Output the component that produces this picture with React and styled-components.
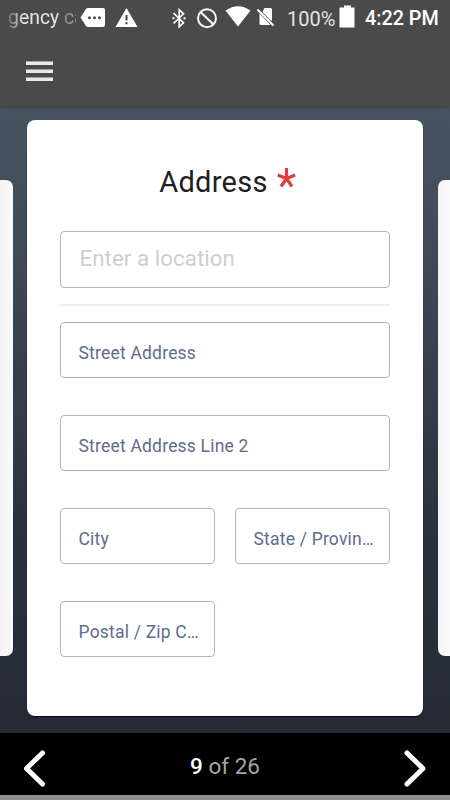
import React from "react";
import styled, { createGlobalStyle } from "styled-components";

const GlobalStyle = createGlobalStyle`
  * { box-sizing: border-box; }
  body { margin: 0; font-family: Roboto, "Liberation Sans", sans-serif; }
`;

const Screen = styled.div`
  width: 450px;
  height: 800px;
  overflow: hidden;
  display: flex;
  flex-direction: column;
  background: #000;
`;

const Header = styled.header`
  height: 106px;
  flex: none;
  background: #4a4a4a;
  box-shadow: 0 1px 4px rgba(0, 0, 0, 0.25);
  z-index: 1;
`;

const StatusBar = styled.div`
  height: 36px;
  display: flex;
  align-items: flex-start;
  padding-left: 8px;
  color: #fff;
  font-size: 20px;
  line-height: 24px;
  white-space: nowrap;
`;

const Ticker = styled.div`
  width: 68px;
  margin-top: 6px;
  overflow: hidden;
  color: #e6e6e6;
  font-size: 19.4px;
  mask-image: linear-gradient(90deg, rgba(0, 0, 0, 0.25) 0, #000 16px, #000 48px, rgba(0, 0, 0, 0.4) 58px, rgba(0, 0, 0, 0.6));
`;

const StatusIcon = styled.svg`
  flex: none;
  display: block;
  margin: ${(p) => p.$top}px 0 0 ${(p) => p.$gap}px;
`;

const BatteryLevel = styled.span`
  width: 50px;
  margin: 7px 0 0 12px;
  color: #e4e4e4;
`;

const Clock = styled.span`
  margin: 7px 0 0 9px;
  font-size: 19.8px;
  font-weight: 500;
`;

const MenuButton = styled.button`
  display: flex;
  flex-direction: column;
  gap: 4px;
  width: 27px;
  margin: 25px 0 0 26px;
  padding: 0;
  border: 0;
  background: none;
`;

const MenuLine = styled.span`
  height: 4px;
  background: #e9e9e9;
  border: solid #a0a0a0;
  border-width: 1px 0 0;
`;

const Stage = styled.main`
  height: 627px;
  flex: none;
  display: flex;
  justify-content: space-between;
  align-items: flex-start;
  padding-top: 14px;
  background: linear-gradient(180deg, #47535f 0%, #414c58 20%, #2b333f 65%, #232a34 100%);
`;

const SideCard = styled.div`
  width: 12.5px;
  height: 476.5px;
  margin-top: 59.6px;
  background: linear-gradient(90deg, #f4f4f5, #fafafa);
  border-radius: ${(p) => (p.$right ? "7px 0 0 7px" : "0 7px 7px 0")};
`;

const Card = styled.form`
  width: 396px;
  height: 596px;
  padding: 41px 33px 0;
  background: #fff;
  border-radius: 8px;
  box-shadow: 0 1px 1px #05090f;
`;

const Title = styled.h1`
  display: flex;
  justify-content: center;
  gap: 9px;
  height: 42px;
  margin: 0;
  padding-left: 5px;
  color: #202020;
  font-size: 29px;
  font-weight: 400;
  line-height: 42px;
  letter-spacing: 0.3px;
`;

const Required = styled.svg`
  margin-top: 7px;
`;

const Field = styled.div`
  min-width: 0;
  height: 56.5px;
  padding: 2px 14px 0 17.5px;
  border: 1px solid #abb4c9;
  border-radius: 4px;
  color: #5f6d8c;
  font-size: 17.5px;
  line-height: 56px;
  letter-spacing: 0.2px;
  white-space: nowrap;
  overflow: hidden;
  text-overflow: ellipsis;
`;

const LocationField = styled(Field)`
  margin-top: 28.4px;
  padding: 0 18.5px;
  color: #cecece;
  font-size: 22.3px;
  line-height: 53px;
  letter-spacing: 0.05px;
`;

const Divider = styled.hr`
  height: 2px;
  margin: 16px 0;
  border: 0;
  background: #efeff0;
`;

const FieldGrid = styled.div`
  display: grid;
  grid-template-columns: 155px 155px;
  column-gap: 20px;
  row-gap: 36.5px;
`;

const WideField = styled(Field)`
  grid-column: 1 / -1;
`;

const Footer = styled.footer`
  height: 67px;
  flex: none;
  display: flex;
  justify-content: space-between;
  align-items: flex-start;
  padding: 16px 23px 0;
  border-bottom: 5px solid #908e8e;
  background: #000;
`;

const NavButton = styled.button`
  width: 24px;
  height: 40px;
  padding: 0;
  border: 0;
  background: none;
`;

const Counter = styled.div`
  padding-top: 3px;
  color: #a5a5a5;
  font-size: 22.5px;
  line-height: 28px;
`;

const Current = styled.span`
  color: #fff;
  font-weight: 500;
`;

function StatusIcons() {
  return (
    <>
      <StatusIcon $top={8} $gap={4} width="26" height="19" viewBox="0 0 26 19">
        <path d="M8 0H23Q25 0 25 2V17Q25 19 23 19H8Q6.800 19 6 18L.5 9.500 6 1Q6.800 0 8 0Z" fill="#fff" />
        <g fill="#4a4a4a"><circle cx="9.500" cy="9.700" r="1.500" /><circle cx="14.500" cy="9.700" r="1.500" /><circle cx="19.500" cy="9.700" r="1.500" /></g>
      </StatusIcon>
      <StatusIcon $top={8} $gap={9} width="23" height="19" viewBox="0 0 23 19">
        <path d="M11.500 0 22.500 19H.5Z" fill="#fff" />
        <path d="M10.500 7h2v5.500h-2zM10.500 14h2v2.200h-2z" fill="#4a4a4a" />
      </StatusIcon>
      <StatusIcon $top={8} $gap={34} width="15" height="21" viewBox="0 0 15 21">
        <path d="M1.500 5 11.500 14.800 7.200 18.800V1.800L11.500 5.800 1.500 15.500" fill="none" stroke="#fff" strokeWidth="1.700" />
        <path d="M.5 9.300h2v2h-2zM11.500 9.300h2v2h-2z" fill="#fff" />
      </StatusIcon>
      <StatusIcon $top={8} $gap={9} width="22" height="21" viewBox="0 0 22 21">
        <circle cx="11" cy="10.200" r="9" fill="none" stroke="#f7f7f7" strokeWidth="2" />
        <path d="m4.500 4 13 12.500" stroke="#f7f7f7" strokeWidth="2" />
      </StatusIcon>
      <StatusIcon $top={6} $gap={7} width="26" height="21" viewBox="0 0 26 21">
        <path d="M.5 4.500Q13-4 25.500 4.500L13 20.500Z" fill="#fff" />
      </StatusIcon>
      <StatusIcon $top={8} $gap={6} width="18" height="19" viewBox="0 0 18 19">
        <path d="M7.500 0H13.500Q15 0 15 1.500V13L5.500 3.500ZM2.500 5.500 13.500 17H4Q2.500 17 2.500 15.500Z" fill="#fff" />
        <path d="M4 5 14 15V8L9 3Z" fill="#fff" />
        <path d="m.5 1.500 16 16" stroke="#fff" strokeWidth="2" />
        <path d="m2.500 1.500 13 13" stroke="#4a4a4a" strokeWidth=".8" />
      </StatusIcon>
    </>
  );
}

export default function App() {
  return (
    <>
      <GlobalStyle />
      <Screen>
        <Header>
          <StatusBar>
            <Ticker>gency ca</Ticker>
            <StatusIcons />
            <BatteryLevel>100%</BatteryLevel>
            <StatusIcon $top={5} $gap={2} width="17" height="23" viewBox="0 0 17 23">
              <path d="M5 .5h7V2.500h3.500V22.500H.5V2.500H5z" fill="#fff" />
            </StatusIcon>
            <Clock>4:22 PM</Clock>
          </StatusBar>
          <MenuButton aria-label="Menu">
            <MenuLine />
            <MenuLine />
            <MenuLine />
          </MenuButton>
        </Header>
        <Stage>
          <SideCard />
          <Card>
            <Title>
              Address
              <Required width="19" height="20" viewBox="0 0 19 20" aria-label="required">
                <path d="M9.500 0V10.500M.8 7 9.500 10.500 18.200 7M4 18.500 9.500 10.500 15 18.500" fill="none" stroke="#e23c3c" strokeWidth="3.200" />
              </Required>
            </Title>
            <LocationField>Enter a location</LocationField>
            <Divider />
            <FieldGrid>
              <WideField>Street Address</WideField>
              <WideField>Street Address Line 2</WideField>
              <Field>City</Field>
              <Field>State / Province</Field>
              <Field>Postal / Zip Code</Field>
            </FieldGrid>
          </Card>
          <SideCard $right />
        </Stage>
        <Footer>
          <NavButton aria-label="Previous">
            <svg width="24" height="40" viewBox="0 0 24 40">
              <path d="M19.500 4 3.500 19.500 19.500 35" fill="none" stroke="#fff" strokeWidth="5" strokeLinecap="round" strokeLinejoin="round" />
            </svg>
          </NavButton>
          <Counter><Current>9</Current> of 26</Counter>
          <NavButton aria-label="Next">
            <svg width="24" height="40" viewBox="0 0 24 40">
              <path d="M4 4 20 19.500 4 35" fill="none" stroke="#fff" strokeWidth="5" strokeLinecap="round" strokeLinejoin="round" />
            </svg>
          </NavButton>
        </Footer>
      </Screen>
    </>
  );
}
